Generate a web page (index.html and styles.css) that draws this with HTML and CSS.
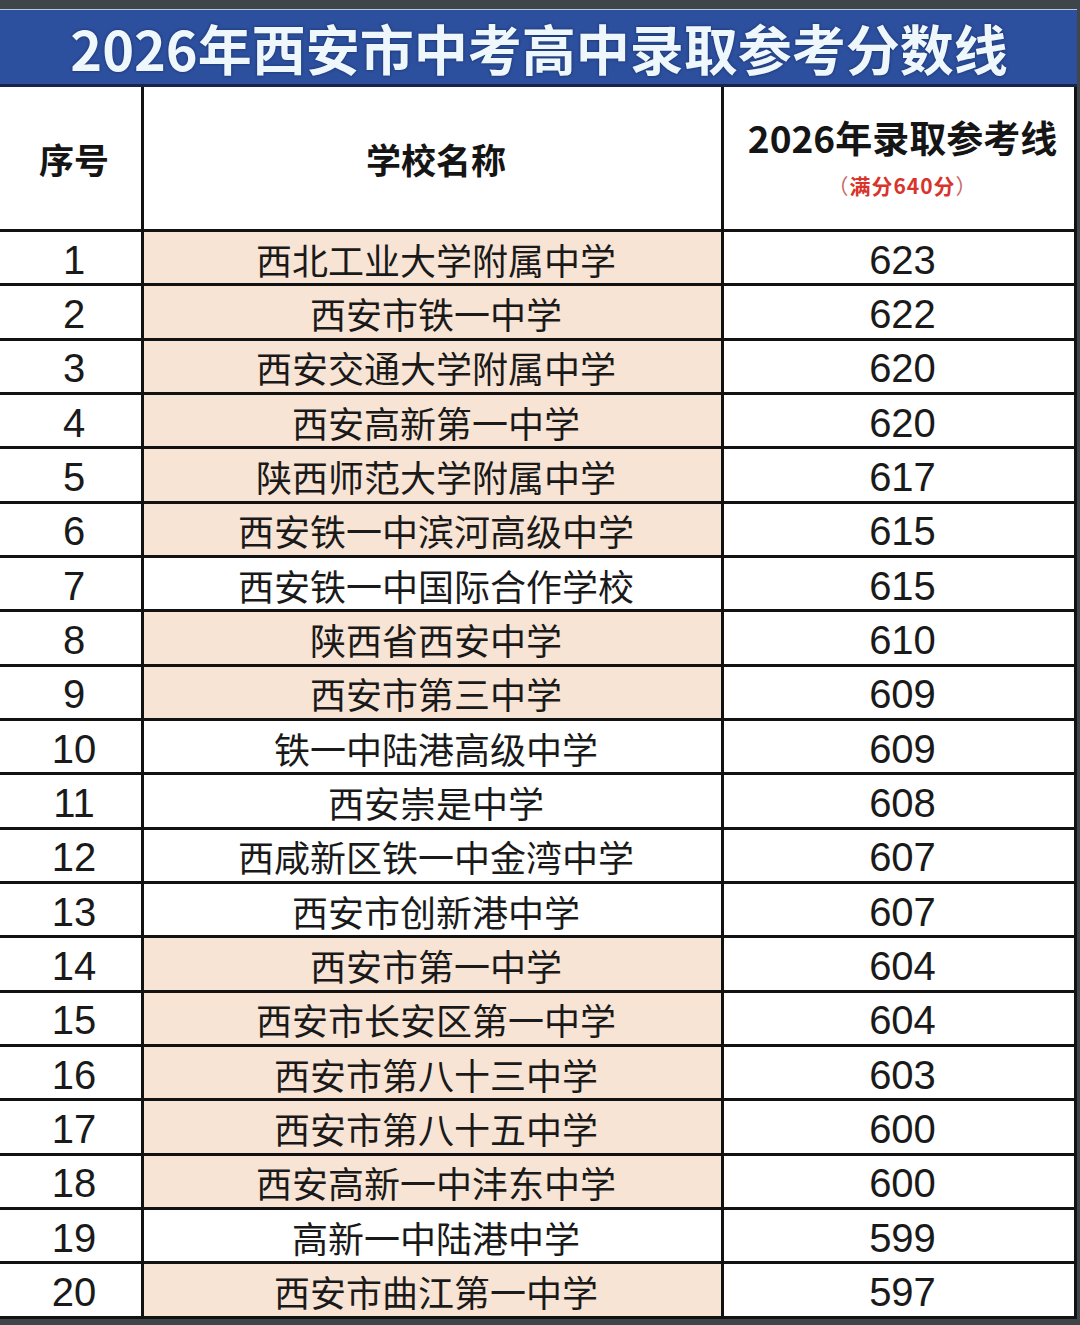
FILE: index.html
```html
<!DOCTYPE html>
<html lang="zh-CN">
<head>
<meta charset="utf-8">
<title>2026年西安市中考高中录取参考分数线</title>
<link rel="stylesheet" href="styles.css">
</head>
<body>
<div class="sheet">
  <div class="title">2026年西安市中考高中录取参考分数线</div>
  <div class="grid">
    <div class="cell head">序号</div>
    <div class="cell head">学校名称</div>
    <div class="cell head stack">
      <div class="head-main">2026年录取参考线</div>
      <div class="head-sub"><span class="paren">（</span>满分640分<span class="paren">）</span></div>
    </div>

    <div class="cell num">1</div><div class="cell name peach">西北工业大学附属中学</div><div class="cell score">623</div>
    <div class="cell num">2</div><div class="cell name peach">西安市铁一中学</div><div class="cell score">622</div>
    <div class="cell num">3</div><div class="cell name peach">西安交通大学附属中学</div><div class="cell score">620</div>
    <div class="cell num">4</div><div class="cell name peach">西安高新第一中学</div><div class="cell score">620</div>
    <div class="cell num">5</div><div class="cell name peach">陕西师范大学附属中学</div><div class="cell score">617</div>
    <div class="cell num">6</div><div class="cell name peach">西安铁一中滨河高级中学</div><div class="cell score">615</div>
    <div class="cell num">7</div><div class="cell name">西安铁一中国际合作学校</div><div class="cell score">615</div>
    <div class="cell num">8</div><div class="cell name peach">陕西省西安中学</div><div class="cell score">610</div>
    <div class="cell num">9</div><div class="cell name peach">西安市第三中学</div><div class="cell score">609</div>
    <div class="cell num">10</div><div class="cell name">铁一中陆港高级中学</div><div class="cell score">609</div>
    <div class="cell num">11</div><div class="cell name">西安崇是中学</div><div class="cell score">608</div>
    <div class="cell num">12</div><div class="cell name">西咸新区铁一中金湾中学</div><div class="cell score">607</div>
    <div class="cell num">13</div><div class="cell name">西安市创新港中学</div><div class="cell score">607</div>
    <div class="cell num">14</div><div class="cell name peach">西安市第一中学</div><div class="cell score">604</div>
    <div class="cell num">15</div><div class="cell name peach">西安市长安区第一中学</div><div class="cell score">604</div>
    <div class="cell num">16</div><div class="cell name peach">西安市第八十三中学</div><div class="cell score">603</div>
    <div class="cell num">17</div><div class="cell name peach">西安市第八十五中学</div><div class="cell score">600</div>
    <div class="cell num">18</div><div class="cell name peach">西安高新一中沣东中学</div><div class="cell score">600</div>
    <div class="cell num">19</div><div class="cell name">高新一中陆港中学</div><div class="cell score">599</div>
    <div class="cell num">20</div><div class="cell name peach">西安市曲江第一中学</div><div class="cell score">597</div>
  </div>
</div>
</body>
</html>
```

FILE: styles.css
```css
html, body {
  margin: 0;
  padding: 0;
}
body {
  background: #3f4649;
  width: 1080px;
  height: 1325px;
  overflow: hidden;
  font-family: "Noto Sans CJK SC", "Noto Sans", sans-serif;
  color: #1a1a1a;
}
.sheet {
  margin-top: 9px;
  width: 1077px;
  background: #ffffff;
}
.title {
  height: 74px;
  border-top: 1px solid #b4c8e4;
  border-bottom: 3px solid #15254c;
  background: #2c4f9e;
  color: #eef7fc;
  font-weight: 700;
  font-size: 54px;
  line-height: 76px;
  text-align: center;
  padding-left: 1px;
  white-space: nowrap;
  text-shadow: 0 0 3px rgba(10, 20, 50, 0.6);
}
.grid {
  display: grid;
  grid-template-columns: 141px 577px 350px;
  grid-template-rows: 142px repeat(20, 51.33px);
  gap: 3px;
  padding: 0 3px 3px 0;
  background: #121212;
}
.cell {
  background: #ffffff;
  display: flex;
  align-items: center;
  justify-content: center;
  white-space: nowrap;
  padding-left: 7px;
}
.head {
  font-weight: 700;
  font-size: 35px;
  color: #151515;
}
.stack {
  flex-direction: column;
}
.head-main {
  font-size: 37px;
  line-height: 42px;
  margin-top: -2px;
}
.head-sub {
  font-size: 21px;
  line-height: 26px;
  margin-top: 14px;
  letter-spacing: 1px;
  color: #d8342c;
  font-weight: 700;
}
.paren {
  color: #c96a63;
  font-weight: 400;
}
.num, .score {
  font-family: "Liberation Sans", Arial, sans-serif;
  font-size: 40px;
  padding-top: 5px;
}
.name {
  font-size: 36px;
  padding-top: 2px;
}
.peach {
  background: #f8e4d4;
}
```
